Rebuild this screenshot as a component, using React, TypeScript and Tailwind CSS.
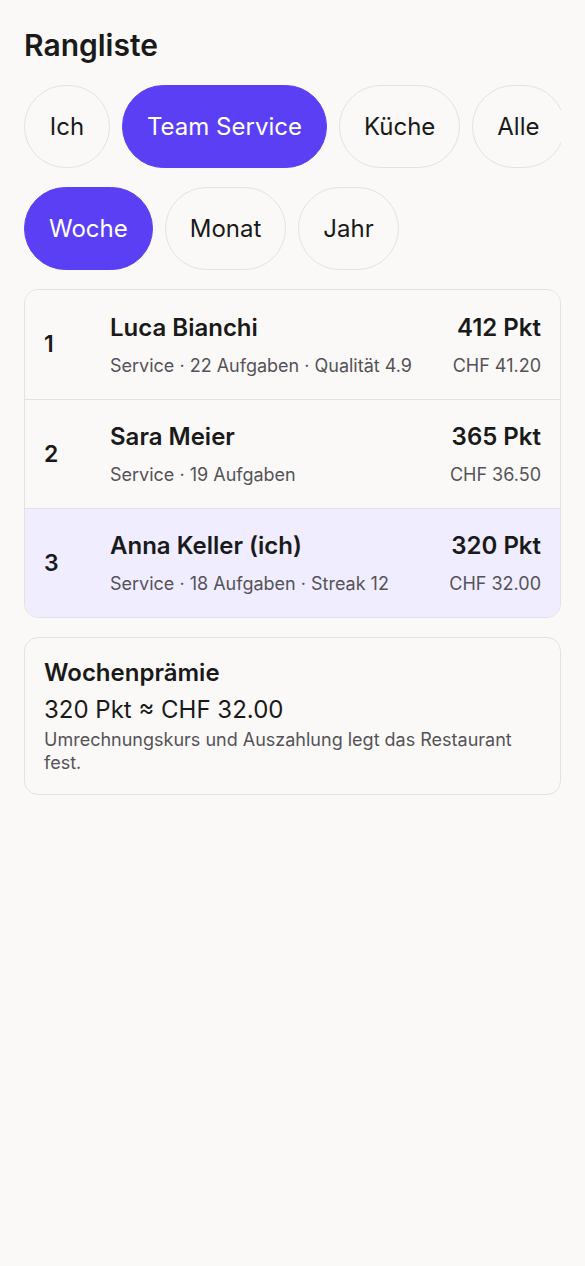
import { useState } from 'react';

const teams = ['Ich', 'Team Service', 'Küche', 'Alle'];
const periods = ['Woche', 'Monat', 'Jahr'];

const ranking = [
  { rank: 1, name: 'Luca Bianchi', meta: 'Service · 22 Aufgaben · Qualität 4.9', points: '412 Pkt', chf: 'CHF 41.20', me: false },
  { rank: 2, name: 'Sara Meier', meta: 'Service · 19 Aufgaben', points: '365 Pkt', chf: 'CHF 36.50', me: false },
  { rank: 3, name: 'Anna Keller (ich)', meta: 'Service · 18 Aufgaben · Streak 12', points: '320 Pkt', chf: 'CHF 32.00', me: true },
];

function Chip({ label, active, onClick }: { label: string; active: boolean; onClick: () => void }) {
  return (
    <button
      onClick={onClick}
      className={`shrink-0 h-[83px] min-w-[86px] px-6 rounded-full border text-[24px] whitespace-nowrap ${
        active ? 'bg-[#5b3ff5] border-[#5b3ff5] text-white' : 'bg-[#faf9f7] border-[#e4e2df] text-[#1a1a1a]'
      }`}
    >
      {label}
    </button>
  );
}

export default function App() {
  const [team, setTeam] = useState('Team Service');
  const [period, setPeriod] = useState('Woche');

  return (
    <div className="min-h-screen bg-[#faf9f7] px-6 pt-[26px] text-[#1a1a1a] font-['Inter',sans-serif]">
      <h1 className="text-[30px] font-semibold leading-[38px]">Rangliste</h1>

      {/* Team filter */}
      <div className="mt-[21px] flex gap-3 overflow-x-auto [scrollbar-width:none]">
        {teams.map((t) => (
          <Chip key={t} label={t} active={team === t} onClick={() => setTeam(t)} />
        ))}
      </div>

      {/* Period filter */}
      <div className="mt-[19px] flex gap-3">
        {periods.map((p) => (
          <Chip key={p} label={p} active={period === p} onClick={() => setPeriod(p)} />
        ))}
      </div>

      {/* Ranking list */}
      <div className="mt-[19px] rounded-[14px] border border-[#e4e2df] overflow-hidden">
        {ranking.map((r, i) => (
          <div
            key={r.rank}
            className={`flex items-center px-[19px] h-[109px] ${i > 0 ? 'border-t border-[#e4e2df]' : ''} ${
              r.me ? 'bg-[#efedff]' : 'bg-[#faf9f7]'
            }`}
          >
            <div className="w-[66px] shrink-0 text-[23px] font-semibold">{r.rank}</div>
            <div className="flex-1 min-w-0">
              <div className="text-[24px] font-semibold leading-[30px]">{r.name}</div>
              <div className="mt-[12px] text-[18px] leading-[22px] text-[#555358]">{r.meta}</div>
            </div>
            <div className="text-right shrink-0">
              <div className="text-[24px] font-semibold leading-[30px]">{r.points}</div>
              <div className="mt-[12px] text-[18px] leading-[22px] text-[#555358]">{r.chf}</div>
            </div>
          </div>
        ))}
      </div>

      {/* Weekly bonus */}
      <div className="mt-[19px] rounded-[14px] border border-[#e4e2df] px-[19px] pt-[20px] pb-[20px]">
        <div className="text-[24px] font-semibold leading-[30px]">Wochenprämie</div>
        <div className="text-[24px] leading-[30px] mt-[7px]">320 Pkt ≈ CHF 32.00</div>
        <p className="mt-[3px] text-[18px] leading-[23px] text-[#555358]">
          Umrechnungskurs und Auszahlung legt das Restaurant fest.
        </p>
      </div>
    </div>
  );
}
